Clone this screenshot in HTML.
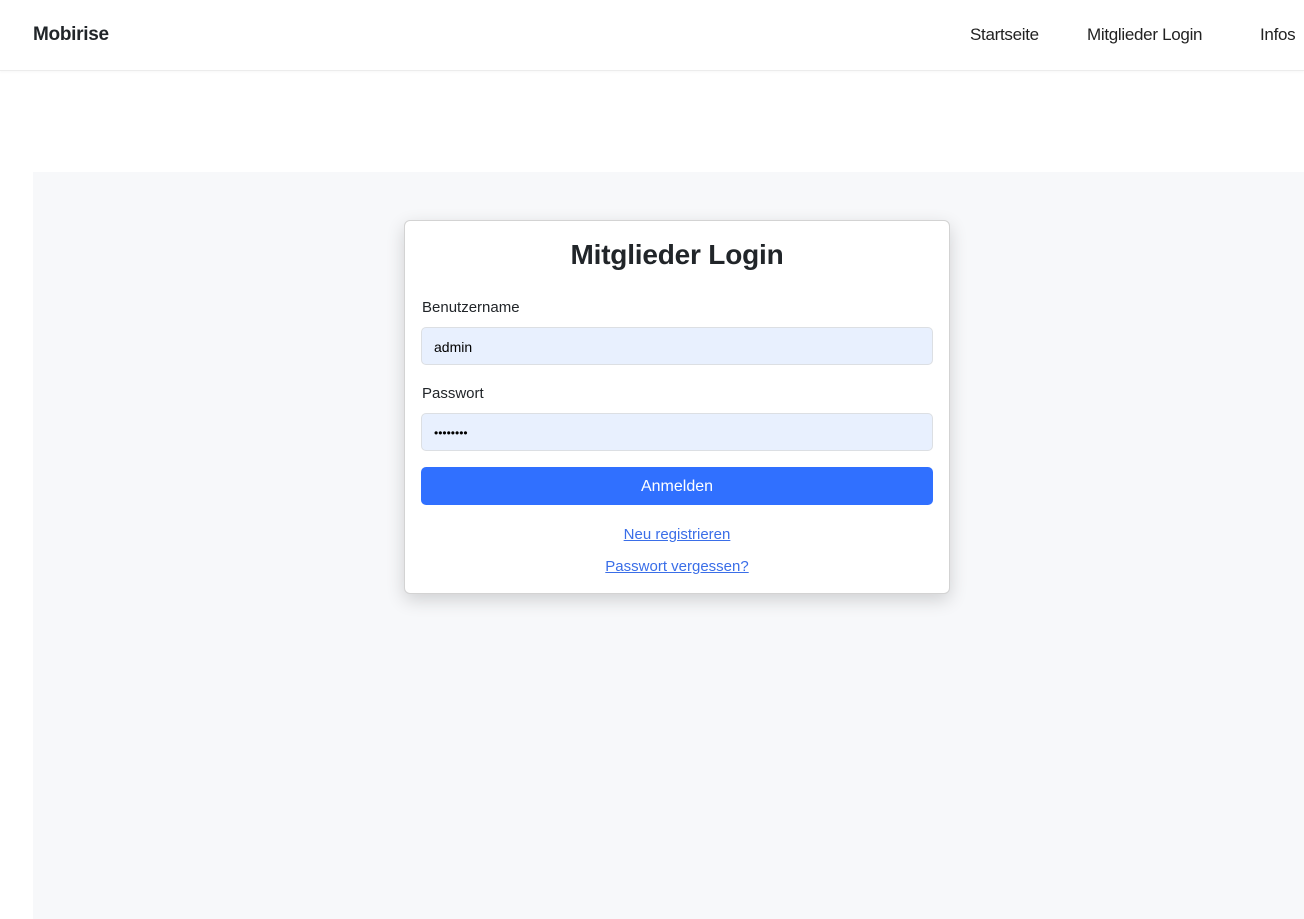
<!DOCTYPE html>
<html><head><style>
body{margin:0;width:1304px;height:919px;overflow:hidden;background:#fff;font-family:"Liberation Sans",sans-serif;color:#212529;position:relative}
.nav{position:absolute;left:0;top:0;width:1304px;height:70px;border-bottom:1px solid #ececec;box-shadow:0 1px 3px rgba(0,0,0,.04)}
.brand{position:absolute;left:33px;top:24px;font-weight:bold;font-size:19px;letter-spacing:-.3px}
.nav a{position:absolute;top:25px;font-size:17px;color:#222;text-decoration:none;letter-spacing:-.3px}
.sec{position:absolute;left:33px;top:172px;width:1271px;height:747px;background:#f7f8fa}
.card{position:absolute;left:404px;top:220px;width:544px;height:372px;background:#fff;border:1px solid #d3d3d3;border-radius:6px;box-shadow:0 6px 18px rgba(0,0,0,.16)}
h1{margin:0;position:absolute;top:18px;width:100%;text-align:center;font-size:28px;font-weight:bold;letter-spacing:-.2px}
.lbl{position:absolute;left:17px;font-size:15px}
.inp{position:absolute;left:16px;width:512px;height:38px;background:#e8f0fe;border:1px solid #dcdfe3;border-radius:5px;font-size:14px;line-height:38px;padding-left:12px;box-sizing:border-box;color:#000}
.btn{position:absolute;left:16px;top:246px;width:512px;height:38px;background:#3070ff;border-radius:5px;color:#fff;text-align:center;line-height:39px;font-size:16px}
.lk{position:absolute;width:100%;text-align:center;font-size:15px;color:#3a6ee8;text-decoration:underline}
</style></head><body>
<div class="nav"><div class="brand">Mobirise</div>
<a style="left:970px">Startseite</a><a style="left:1087px">Mitglieder Login</a><a style="left:1260px">Infos</a></div>
<div class="sec"></div>
<div class="card">
<h1>Mitglieder Login</h1>
<div class="lbl" style="top:78px">Benutzername</div>
<div class="inp" style="top:106px">admin</div>
<div class="lbl" style="top:164px">Passwort</div>
<div class="inp" style="top:192px;font-size:12px">••••••••</div>
<div class="btn">Anmelden</div>
<div class="lk" style="top:305px">Neu registrieren</div>
<div class="lk" style="top:337px">Passwort vergessen?</div>
</div>
</body></html>
